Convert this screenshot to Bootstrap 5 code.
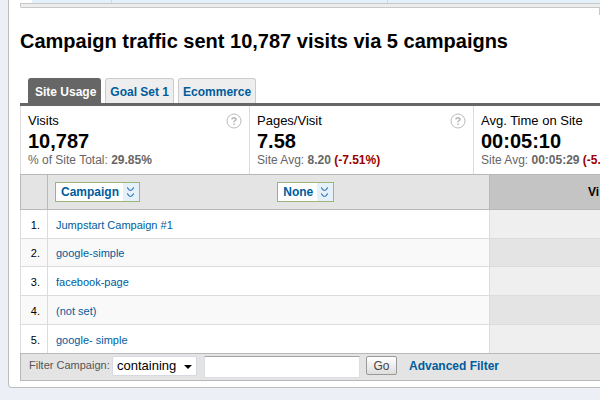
<!DOCTYPE html>
<html lang="en">
<head>
<meta charset="utf-8">
<meta name="viewport" content="width=device-width, initial-scale=1">
<title>Campaigns</title>
<link rel="stylesheet" href="https://cdn.jsdelivr.net/npm/bootstrap@5.3.0/dist/css/bootstrap.min.css">
<style>
body { background: #eceff5; color: #000; font-family: "Liberation Sans", Arial, sans-serif; font-size: 12px; line-height: 16px; overflow: hidden; }
a { color: #005c9c; text-decoration: none; }
a:hover { text-decoration: underline; }
.panel { background: #fff; border: solid #bdbdbd; border-width: 0 0 1px 1px; border-bottom-left-radius: 4px; margin-left: 8px; padding: 0 0 6px 11px; }
.chart-foot { display: grid; grid-template-columns: 80px 276fr 212fr; height: 3px; margin-left: 12px; }
.chart-foot span { background: #e4f1f9; border-right: 1px solid #c9dbe3; }
.chart-foot span:last-child { border-right: 0; }
.chart-bar { height: 5px; background: #ededed; border: 1px solid #c8c8c8; border-right: 0; border-bottom-left-radius: 2px; }
.chart-edge { width: 1px; height: 7px; background: #c8c8c8; }
h1 { font-size: 20px; line-height: 24px; font-weight: 700; margin: 14px 0 25px; }
.report-tabs { border-bottom: 3px solid #666; padding-left: 8px; gap: 4px; }
.report-tabs .nav-link { border: 1px solid #ccc; border-bottom: 0; border-radius: 3px 3px 0 0; background: #eee; color: #005c9c; font-weight: 700; padding: 5px 4px 3px; }
.report-tabs .nav-link.active { background: #666; border-color: #666; color: #fff; padding-left: 6px; }
.metrics { display: grid; grid-template-columns: 229fr 224fr 126fr; border-left: 1px solid #dcdcdc; }
.metric { min-width: 0; height: 68px; padding: 7px; border-right: 1px solid #dcdcdc; }
.metric:last-child { border-right: 0; }
.metric-name { font-size: 13px; }
.metric-value { font-size: 20px; line-height: 24px; font-weight: 700; }
.metric-note { color: #666; line-height: 14px; }
.metric-note .drop { color: #990000; }
.help { border: 0; background: none; padding: 0; line-height: 0; }
.report { table-layout: fixed; width: 100%; border-collapse: separate; border-spacing: 0; }
.report th, .report td { border-left: 1px solid #dcdcdc; overflow: hidden; white-space: nowrap; padding: 0; }
.report th { height: 36px; background: #e4e4e4; border: solid #b8b8b8; border-width: 1px 0 1px 1px; }
.report thead th:last-child { background: #c4c4c4; }
.report td { height: 29px; font-size: 11px; border-bottom: 1px solid #dcdcdc; padding: 1px 8px 0; }
.report tbody tr:nth-child(3n+2) td { height: 28px; }
.report tbody tr:last-child td { border-bottom: 0; }
.report td:first-child { text-align: right; padding-right: 7px; padding-left: 0; }
.report td:last-child { background: #efefef; }
.report tr:nth-child(even) td { background: #f9f9f9; }
.report tr:nth-child(even) td:last-child { background: #e4e4e4; }
.col-number { width: 27px; }
.col-name { width: 76.2%; }
.picker-first { flex: 0 0 52%; padding-left: 7px; }
.picker { display: inline-flex; border: 1px solid #9cb578; background: #fff; color: #005c9c; font-weight: 700; line-height: 18px; padding: 0; }
.picker span { padding: 0 4px 0 5px; }
.picker svg { background: #e4f1f9; }
.visits-head { padding-left: 98px; }
.filter { background: #e4e4e4; border: solid #b8b8b8; border-width: 1px 0 1px 1px; height: 28px; padding-left: 8px; }
.filter label { font-size: 11px; color: #555; width: 83px; line-height: 23px; }
.filter select { appearance: none; width: 85px; height: 20px; margin-top: 2px; border: 1px solid #d6d9e2; border-radius: 2px; font-size: 13px; line-height: 18px; color: #000; padding: 0 4px; background: #fff; }
.select-wrap::after { content: ""; position: absolute; right: 5px; top: 11px; border: solid transparent; border-width: 4px 4px 0; border-top-color: #000; pointer-events: none; }
.filter input { flex: 0 1 156px; min-width: 0; height: 22px; margin: 2px 6px 0 7px; border: 1px solid #dcdee6; border-top-color: #a4a4a8; background: #fff; }
.go { width: 31px; height: 19px; margin: 2px 12px 0 0; border: 1px solid #999; border-radius: 2px; background: linear-gradient(#fff, #ddd); color: #444; line-height: 16px; padding: 0; }
.advanced { line-height: 24px; }
</style>
<script src="https://cdn.jsdelivr.net/npm/bootstrap@5.3.0/dist/js/bootstrap.bundle.min.js"></script>
</head>
<body>
<main class="panel text-nowrap overflow-hidden">
  <div class="chart-foot"><span></span><span></span><span></span></div>
  <div class="chart-bar"></div>
  <div class="chart-edge ms-auto"></div>
  <h1>Campaign traffic sent 10,787 visits via 5 campaigns</h1>

  <nav class="nav report-tabs" aria-label="Report sections">
    <a class="nav-link active" href="#usage" aria-current="page">Site Usage</a>
    <a class="nav-link" href="#goals">Goal Set 1</a>
    <a class="nav-link" href="#ecommerce">Ecommerce</a>
  </nav>

  <section class="metrics">
    <div class="metric">
      <div class="d-flex justify-content-between metric-name">Visits
        <button class="help" type="button" aria-label="About visits"><svg width="16" height="16" viewBox="0 0 16 16" fill="none" stroke="#bbb"><circle cx="8" cy="8" r="7"/><path d="M6 6.5C6 4.4 10 4.4 10 6.3 10 7.5 8 7.7 8 9.3M8 10.4V12" stroke-width="1.6"/></svg></button>
      </div>
      <div class="metric-value">10,787</div>
      <div class="metric-note">% of Site Total: <b>29.85%</b></div>
    </div>
    <div class="metric">
      <div class="d-flex justify-content-between metric-name">Pages/Visit
        <button class="help" type="button" aria-label="About pages per visit"><svg width="16" height="16" viewBox="0 0 16 16" fill="none" stroke="#bbb"><circle cx="8" cy="8" r="7"/><path d="M6 6.5C6 4.4 10 4.4 10 6.3 10 7.5 8 7.7 8 9.3M8 10.4V12" stroke-width="1.6"/></svg></button>
      </div>
      <div class="metric-value">7.58</div>
      <div class="metric-note">Site Avg: <b>8.20 <span class="drop">(-7.51%)</span></b></div>
    </div>
    <div class="metric">
      <div class="metric-name">Avg. Time on Site</div>
      <div class="metric-value">00:05:10</div>
      <div class="metric-note">Site Avg: <b>00:05:29 <span class="drop">(-5.8</span></b></div>
    </div>
  </section>

  <table class="report">
    <colgroup><col class="col-number"><col class="col-name"><col></colgroup>
    <thead>
      <tr>
        <th></th>
        <th>
          <div class="d-flex">
            <div class="picker-first"><button class="picker" type="button"><span>Campaign</span><svg width="16" height="18" viewBox="0 0 16 18" fill="none" stroke="#3b78bd" stroke-width="1.2"><path d="M4 4.5C5 4.7 5.5 7.5 7.5 7.5S10 4.7 11 4.5M4 10.5C5 10.7 5.5 13.5 7.5 13.5S10 10.7 11 10.5"/></svg></button></div>
            <button class="picker" type="button"><span>None</span><svg width="16" height="18" viewBox="0 0 16 18" fill="none" stroke="#3b78bd" stroke-width="1.2"><path d="M4 4.5C5 4.7 5.5 7.5 7.5 7.5S10 4.7 11 4.5M4 10.5C5 10.7 5.5 13.5 7.5 13.5S10 10.7 11 10.5"/></svg></button>
          </div>
        </th>
        <th><div class="visits-head">Vi</div></th>
      </tr>
    </thead>
    <tbody>
      <tr><td>1.</td><td><a href="#c1">Jumpstart Campaign #1</a></td><td></td></tr>
      <tr><td>2.</td><td><a href="#c2">google-simple</a></td><td></td></tr>
      <tr><td>3.</td><td><a href="#c3">facebook-page</a></td><td></td></tr>
      <tr><td>4.</td><td><a href="#c4">(not set)</a></td><td></td></tr>
      <tr><td>5.</td><td><a href="#c5">google- simple</a></td><td></td></tr>
    </tbody>
  </table>

  <form class="filter d-flex align-items-start">
    <label for="mode">Filter Campaign:</label>
    <div class="select-wrap position-relative"><select id="mode"><option>containing</option></select></div>
    <input type="text" aria-label="Filter text">
    <button class="go" type="button">Go</button>
    <a class="advanced fw-bold" href="#advanced">Advanced Filter</a>
  </form>
</main>
</body>
</html>
